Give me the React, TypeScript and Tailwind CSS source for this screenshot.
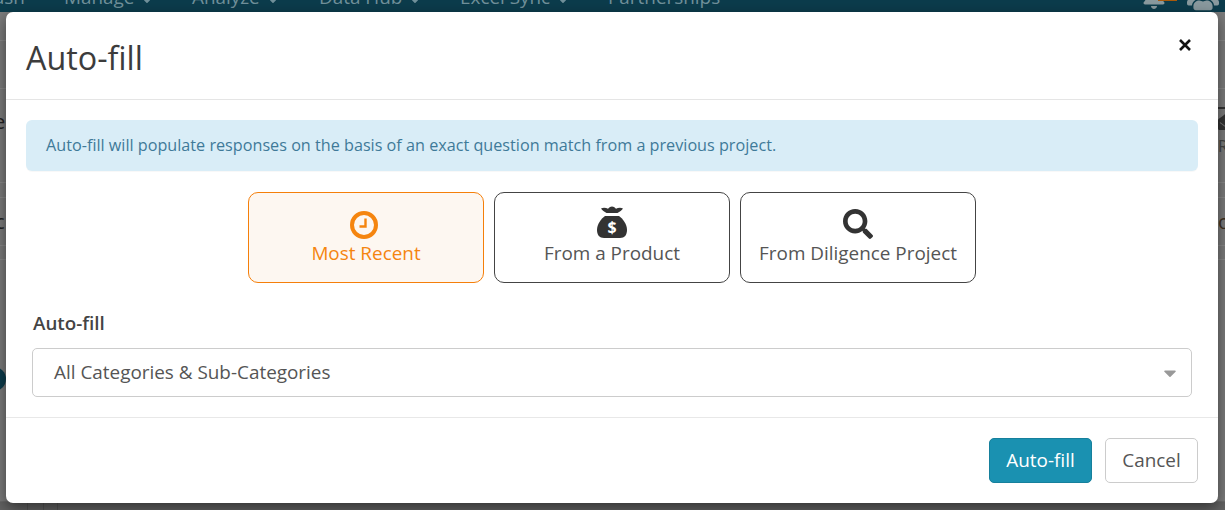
import React from 'react';
import { FaBell, FaUsers, FaSearch, FaCaretDown, FaEnvelopeOpen } from 'react-icons/fa';

const font = { fontFamily: '"Open Sans", sans-serif' };

function ClockIcon() {
  return (
    <svg width="28" height="28" viewBox="0 0 28 28" fill="none" stroke="currentColor" className="-ml-[4px]">
      <circle cx="14" cy="14" r="12" strokeWidth="4" />
      <path d="M15.500 7.500v8H9.500" strokeWidth="2.400" />
    </svg>
  );
}

function BagIcon() {
  return (
    <svg width="32" height="34" viewBox="0 0 32 34" className="text-[#333]">
      <path
        d="M5 3.500c2.500-1.500 5-.8 7 .2 1.500-1.500 2.500-2.200 4-2.200s2.500.7 4 2.200c2-1 4.500-1.700 7-.2-1 1.800-3.500 3.300-5.500 4.500h-11C8.500 6.800 6 5.300 5 3.500z"
        fill="currentColor"
      />
      <path
        d="M9 11h14c4 3 8 8 8 14 0 5-2.500 8-7 8H8c-4.500 0-7-3-7-8 0-6 4-11 8-14z"
        fill="currentColor"
      />
      <text x="16" y="28" textAnchor="middle" fontSize="16" fontWeight="700" fill="#fff" fontFamily="Open Sans, sans-serif">
        $
      </text>
    </svg>
  );
}

function SourceButton({ label, active, icon }: { label: string; active?: boolean; icon: React.ReactNode }) {
  return (
    <button
      className={
        active
          ? 'w-[236px] h-[91px] rounded-[10px] border border-[#f57f0a] bg-[#fdf7f1] text-[#f5850f] flex flex-col items-center'
          : 'w-[236px] h-[91px] rounded-[10px] border border-[#444] bg-white text-[#555] flex flex-col items-center'
      }
    >
      <div className="h-[46px] flex items-end justify-center">{icon}</div>
      <div className="text-[18.900px] leading-[24px] mt-[2px]">{label}</div>
    </button>
  );
}

function NavItem({ label, className }: { label: string; className: string }) {
  return (
    <span className={`flex ${className}`}>
      <span>{label}</span>
      <FaCaretDown className="ml-[8px] text-[10px] mt-[11px]" />
    </span>
  );
}

export default function App() {
  return (
    <div className="relative h-[510px] w-[1225px] overflow-hidden bg-[#7c7c7c]" style={font}>
      {/* dimmed page behind the modal */}
      <div className="h-[12px] bg-[#0c3c4c] overflow-hidden flex items-start text-[18.900px] text-[#71919b] leading-[24px]">
        <div className="flex h-[24px] shrink-0 -mt-[15px] -ml-[20px]">
          <span className="w-[84px]">Dash</span>
          <NavItem label="Manage" className="w-[128px]" />
          <NavItem label="Analyze" className="w-[127px]" />
          <NavItem label="Data Hub" className="w-[141px]" />
          <NavItem label="Excel Sync" className="w-[148px]" />
          <span className="w-[534px]">Partnerships</span>
          <FaBell className="text-[#8a9a9f] text-[24px]" />
          <span className="w-[19px] h-[16px] bg-[#a85a0c] -ml-[8px]" />
          <FaUsers className="text-[#8a9a9f] text-[32px] -mt-[2px] ml-[10px]" />
        </div>
      </div>
      <div className="h-[29px] border-b border-[#8a8a8a]" />
      <div className="h-[48px] border-b border-[#8a8a8a]" />
      <div className="h-[94px] border-b border-[#8a8a8a] flex justify-between text-[20px] leading-[24px] text-[#222]">
        <span className="-ml-[6px] mt-[21px]">e</span>
        <div className="flex flex-col w-[7px] mt-[18px] overflow-hidden">
          <div className="h-[2px] bg-[#333] shrink-0" />
          <FaEnvelopeOpen className="text-[#333] text-[16px] shrink-0 mt-[5px]" />
          <span className="text-[#444] text-[16px] leading-[20px] mt-[6px]">R</span>
        </div>
      </div>
      <div className="h-[15px] border-b border-[#8a8a8a]" />
      <div className="h-[48px] border-b border-[#8a8a8a] flex justify-between items-center text-[20px]">
        <span className="-ml-[5px] text-[#222]">c</span>
        <span className="w-[7px] overflow-hidden text-[#3f3020]">o</span>
      </div>
      <div className="h-[14px] border-b border-[#8a8a8a]" />
      <div className="h-[135px] border-b border-[#6c6c6c]">
        <div className="w-[24px] h-[24px] rounded-full bg-[#0c3c4c] -ml-[18px] mt-[107px]" />
      </div>
      <div className="h-[116px] bg-[#636363] flex pl-[27px]">
        <div className="w-[16px] border-l border-[#555]" />
        <div className="w-[14px] border-l border-[#555]" />
        <div className="w-[14px] border-l border-[#555]" />
      </div>

      {/* modal */}
      <div className="absolute inset-0 pt-[12px] pl-[6px]">
        <div className="w-[1212px] h-[491px] bg-white rounded-[7px] shadow-[0_5px_15px_rgba(0,0,0,0.5)] flex flex-col text-[#333]">
          <div className="h-[88px] border-b border-[#e5e5e5] flex items-center justify-between pl-[20px] pr-[26px] shrink-0">
            <h4 className="text-[32.300px] leading-[44px] mt-[3px] text-[#3c3c3c]">Auto-fill</h4>
            <svg width="14" height="14" viewBox="0 0 14 14" stroke="#111" strokeWidth="2.600" className="-mt-[22px]">
              <path d="M2 2l10 10M12 2L2 12" />
            </svg>
          </div>
          <div className="h-[318px] border-b border-[#e8e8e8] shrink-0 px-[20px] pt-[20px]">
            <div className="h-[51px] rounded-[6px] bg-[#d9edf7] text-[#3f7a99] text-[16.200px] flex items-center px-[20px] shadow-[0_1px_1px_rgba(0,0,0,0.03)]">
              Auto-fill will populate responses on the basis of an exact question match from a previous project.
            </div>
            <div className="flex justify-center gap-[10px] mt-[21px]">
              <SourceButton label="Most Recent" active icon={<ClockIcon />} />
              <SourceButton label="From a Product" icon={<BagIcon />} />
              <SourceButton
                label="From Diligence Project"
                icon={<FaSearch className="text-[#333] text-[30px]" />}
              />
            </div>
            <div className="px-[6px] mt-[28px]">
              <label className="block text-[18.800px] leading-[24px] font-semibold text-[#444] ml-[1px]">Auto-fill</label>
              <div className="h-[49px] mt-[13px] rounded-[5px] border border-[#ccc] flex items-center justify-between pl-[21px] pr-[11px] text-[18.900px] text-[#555]">
                <span>All Categories &amp; Sub-Categories</span>
                <FaCaretDown className="text-[#999] text-[20px]" />
              </div>
            </div>
          </div>
          <div className="flex-1 flex justify-end items-start pt-[20px] pr-[20px] gap-[13px] text-[18.900px]">
            <button className="w-[103px] h-[45px] rounded-[5px] bg-[#1a91b1] border border-[#16809c] text-white">Auto-fill</button>
            <button className="w-[93px] h-[45px] rounded-[5px] bg-white border border-[#ccc] text-[#555]">Cancel</button>
          </div>
        </div>
      </div>
    </div>
  );
}
